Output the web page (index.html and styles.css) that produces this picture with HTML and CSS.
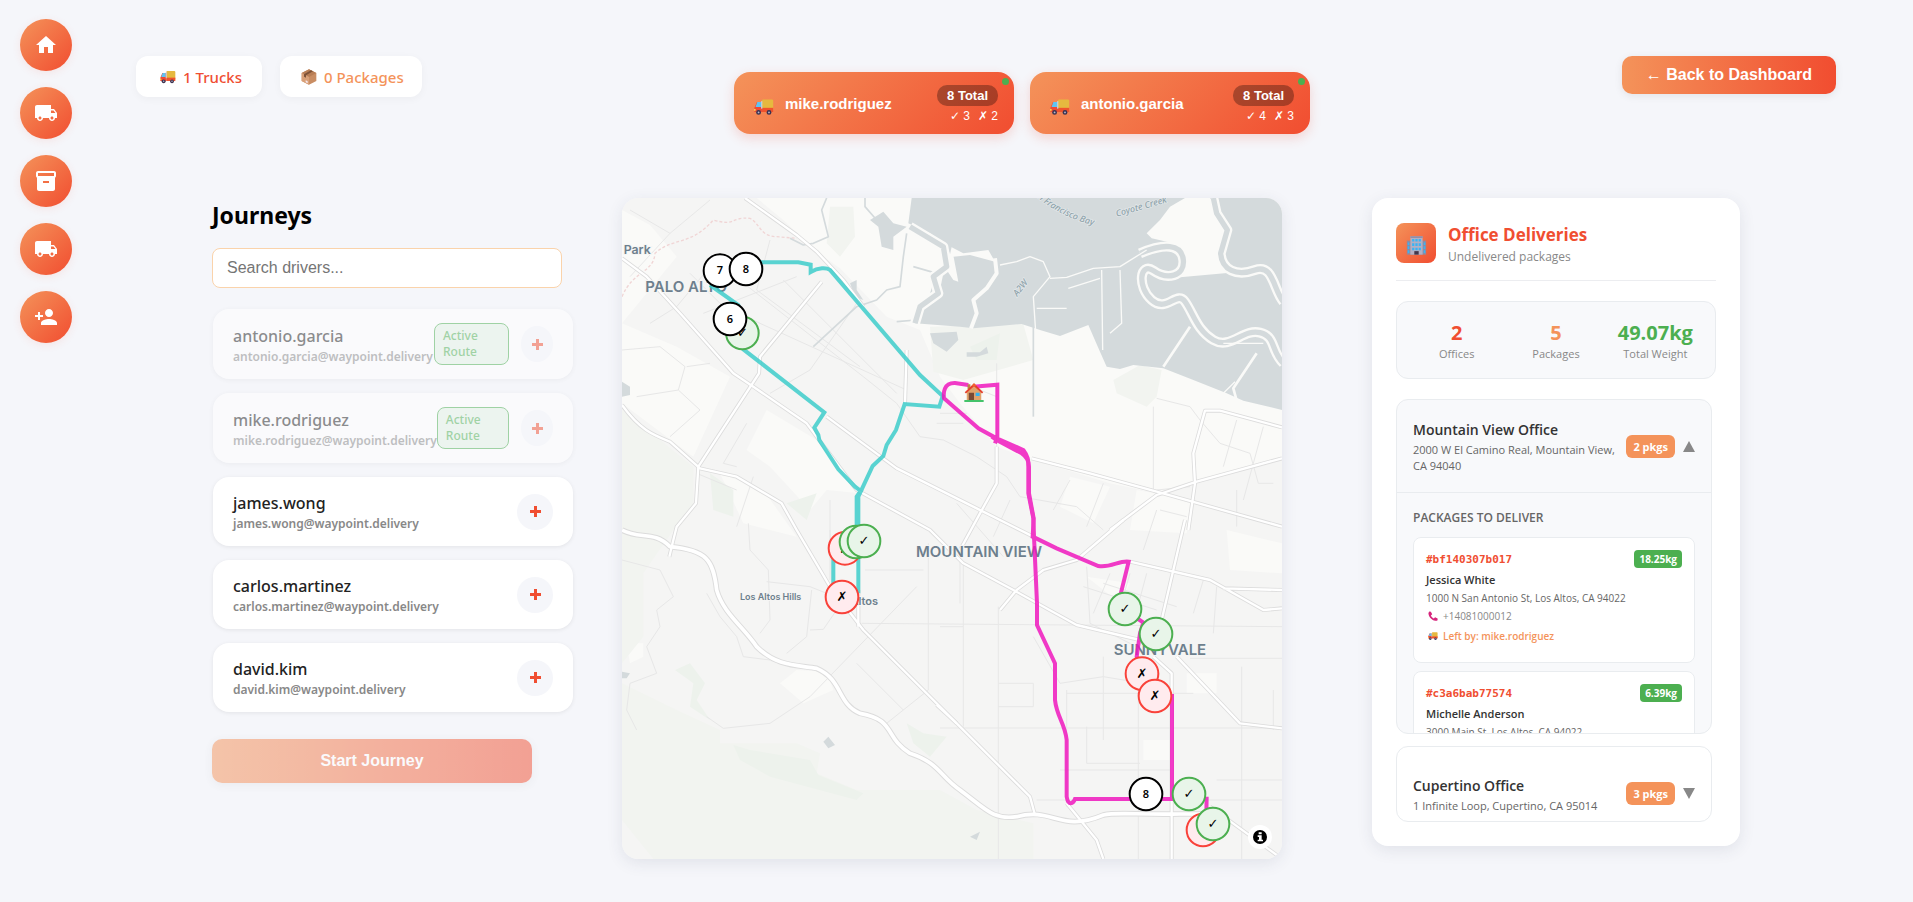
FILE: index.html
```html
<!DOCTYPE html>
<html lang="en">
<head>
<meta charset="utf-8">
<title>Journeys</title>
<link rel="stylesheet" href="styles.css">
</head>
<body>
<svg class="sprite" aria-hidden="true">
  <symbol id="truck" viewBox="0 0 24 24">
    <rect x="9.500" y="3" width="13.500" height="13.500" rx="1.500" fill="#e6b93f"/>
    <rect x="9.500" y="13" width="13.500" height="5" fill="#f0532d"/>
    <path d="M3.500 6h6v12h-9v-5z" fill="#ee4a35"/>
    <path d="M4 6h4.500v6H1.800z" fill="#5fc4f2"/>
    <rect x="8.500" y="5" width="1.500" height="9" fill="#c9d3dc"/>
    <rect x="0" y="14.500" width="2" height="2" fill="#ffd54a"/>
    <circle cx="5.500" cy="18.500" r="2.900" fill="#3b3350"/><circle cx="5.500" cy="18.500" r="1.100" fill="#b9b3c9"/>
    <circle cx="18" cy="18.500" r="2.900" fill="#3b3350"/><circle cx="18" cy="18.500" r="1.100" fill="#b9b3c9"/>
  </symbol>
  <symbol id="box" viewBox="0 0 24 24">
    <path d="M12 .5 23 6v12l-11 5.500L1 18V6z" fill="#c98d63"/>
    <path d="M12 .5 23 6l-11 6L1 6z" fill="#b87e55"/>
    <path d="M1 6l11 6v11.500L1 18z" fill="#d9a078"/>
    <path d="M15 2 4.500 7.800v4l3 1.500V9.500L18 3.500z" fill="#7d5238"/>
    <path d="M7 17l3 1.500v3L7 20z" fill="#f6e9f0"/>
  </symbol>
  <symbol id="office" viewBox="0 0 24 24">
    <path d="M1 7h22v16H1z" fill="#8f8aa0"/>
    <path d="M5 2h14v21H5z" fill="#b4afc2"/><path d="M5 2h14v2H5z" fill="#938ea6"/>
    <g fill="#39b4f5"><path d="M7 5h2.500v3H7zM10.700 5h2.600v3h-2.600zM14.500 5H17v3h-2.500zM7 10h2.500v3H7zM10.700 10h2.600v3h-2.600zM14.500 10H17v3h-2.500zM7 15h2.500v3H7zM10.700 15h2.600v3h-2.600zM14.500 15H17v3h-2.500z"/>
    <path d="M2 9h1.800v3H2zM2 13.500h1.800v3H2zM2 18h1.800v3H2zM20.200 9H22v3h-1.800zM20.200 13.500H22v3h-1.800zM20.200 18H22v3h-1.800z"/></g>
    <path d="M9.500 19h5v4h-5z" fill="#43364a"/>
  </symbol>
  <symbol id="phone" viewBox="0 0 24 24">
    <path d="M3 1l4 1 3 6-3 3c1 3 4 6 7 7l3-3 6 3v4c-2 2-5 2-8 1C8 21 2 14 1 6c0-2 1-4 2-5z" fill="#d6257c"/>
  </symbol>
  <symbol id="house" viewBox="0 0 24 24">
    <path d="M4 2h3.500v6H4z" fill="#b98548"/>
    <path d="M12 3l9 9v10H3V12z" fill="#e0a36c"/>
    <path d="M5.500 12.500H12V22H5.500z" fill="#7a4a35"/>
    <path d="M14 12.500h5v4h-5z" fill="#35b3f0"/>
    <path d="M12 .8 23.500 12l-1.500 1.600L12 4.500 2 13.600.5 12z" fill="#e5402c"/>
    <path d="M9 3.700 12 .8l3 2.900-3 1z" fill="#f0632f"/>
    <path d="M0 21.500h24V24H0z" fill="#44c36a"/>
  </symbol>
  <symbol id="m-truck" viewBox="0 0 24 24"><path d="M20 8h-3V4H3c-1.100 0-2 .9-2 2v11h2c0 1.660 1.340 3 3 3s3-1.340 3-3h6c0 1.660 1.340 3 3 3s3-1.340 3-3h2v-5l-3-4zM6 18.500c-.83 0-1.500-.67-1.500-1.500s.67-1.500 1.500-1.500 1.500.67 1.500 1.500-.67 1.500-1.500 1.500zm13.500-9l1.960 2.500H17V9.500h2.500zm-1.500 9c-.83 0-1.500-.67-1.500-1.500s.67-1.500 1.500-1.500 1.500.67 1.500 1.500-.67 1.500-1.500 1.500z"/></symbol>
</svg>

<div class="app">
  <nav class="rail" aria-label="Main">
    <a href="#" aria-label="Home"><svg viewBox="0 0 24 24"><path d="M10 20v-6h4v6h5v-8h3L12 3 2 12h3v8z"/></svg></a>
    <a href="#" aria-label="Trucks"><svg><use href="#m-truck"/></svg></a>
    <a href="#" aria-label="Packages"><svg viewBox="0 0 24 24"><path fill-rule="evenodd" d="M20 2H4c-1 0-2 .9-2 2v3.010c0 .72.430 1.340 1 1.690V20c0 1.100 1.100 2 2 2h14c.9 0 2-.9 2-2V8.700c.57-.35 1-.97 1-1.690V4c0-1.100-1-2-2-2zm-5 12H9v-2h6v2zm5-7H4V4h16v3z"/></svg></a>
    <a href="#" aria-label="Journeys"><svg><use href="#m-truck"/></svg></a>
    <a href="#" aria-label="Add driver"><svg viewBox="0 0 24 24"><path d="M15 12c2.210 0 4-1.790 4-4s-1.790-4-4-4-4 1.790-4 4 1.790 4 4 4zm-9-2V7H4v3H1v2h3v3h2v-3h3v-2H6zm9 4c-2.670 0-8 1.340-8 4v2h16v-2c0-2.660-5.330-4-8-4z"/></svg></a>
  </nav>

  <div class="page">
    <header class="top">
      <div class="counts">
        <div class="count count-trucks"><svg><use href="#truck"/></svg>1 Trucks</div>
        <div class="count count-packages"><svg><use href="#box"/></svg>0 Packages</div>
      </div>
      <div class="routes">
        <button class="route" type="button"><svg><use href="#truck"/></svg><span class="route-name">mike.rodriguez</span><span class="route-stats"><span class="total">8 Total</span><span class="marks"><span>✓ 3</span><span>✗ 2</span></span></span></button>
        <button class="route" type="button"><svg><use href="#truck"/></svg><span class="route-name">antonio.garcia</span><span class="route-stats"><span class="total">8 Total</span><span class="marks"><span>✓ 4</span><span>✗ 3</span></span></span></button>
      </div>
      <button class="back" type="button">← Back to Dashboard</button>
    </header>

    <main class="board">
      <section class="journeys">
        <h1>Journeys</h1>
        <input class="search" type="search" placeholder="Search drivers..." aria-label="Search drivers">
        <ul class="drivers">
          <li class="driver busy"><div class="who"><b>antonio.garcia</b><span>antonio.garcia@waypoint.delivery</span></div><span class="active">Active Route</span><button type="button" disabled aria-label="Add antonio.garcia"></button></li>
          <li class="driver busy"><div class="who"><b>mike.rodriguez</b><span>mike.rodriguez@waypoint.delivery</span></div><span class="active">Active Route</span><button type="button" disabled aria-label="Add mike.rodriguez"></button></li>
          <li class="driver"><div class="who"><b>james.wong</b><span>james.wong@waypoint.delivery</span></div><button type="button" aria-label="Add james.wong"></button></li>
          <li class="driver"><div class="who"><b>carlos.martinez</b><span>carlos.martinez@waypoint.delivery</span></div><button type="button" aria-label="Add carlos.martinez"></button></li>
          <li class="driver"><div class="who"><b>david.kim</b><span>david.kim@waypoint.delivery</span></div><button type="button" aria-label="Add david.kim"></button></li>
        </ul>
        <button class="start" type="button" disabled>Start Journey</button>
      </section>

      <section class="map" aria-label="Route map">
        <svg viewBox="36 24 1980 1983">
          <defs>
            <g id="roads">
              <path d="M405 24 560 135 620 185 700 270 760 350"/>
              <path d="M36 205 110 260 215 375 370 550 430 590 590 700 650 780 740 900 960 1020 1060 1120 1210 1200 1400 1305 1590 1350"/>
              <path d="M635 275 450 500 447 550 265 830 258 940 200 1010 190 1050 178 1100"/>
              <path d="M36 645C90 720 130 735 180 755L270 835 380 860 515 940 560 1020 660 1190 760 1320 1040 1600 1260 1820 1275 1875"/>
              <path d="M650 680 860 835 1100 955 1270 1040M1265 805 1440 850 1640 905 2016 1010"/>
              <path d="M1500 1020 1640 915 1760 875 2016 805M1735 1020 1755 880 1750 790 1785 662 1830 662 2016 712"/>
              <path d="M1160 770 1160 880 1110 970 1050 1080M1540 990 1400 1110 1300 1140 1220 1200 1170 1260M1725 990 1655 1290"/>
              <path d="M1560 1115 1800 1170 1960 1260 2016 1255M1840 1195 2016 1200"/>
              <path d="M1630 1400 1685 1450 1685 2007M1700 1400 1890 1600 2016 1615M980 1545 1040 1600"/>
              <path d="M890 480 885 640M745 1200 745 1310M1370 1840 1460 1950 1480 2007M1800 1850 2000 1995"/>
            </g>
            <path id="freeway" d="M36 1020C90 1050 130 1020 180 1070 290 1080 310 1110 320 1200 340 1270 400 1310 440 1370 500 1430 560 1425 620 1435 700 1470 680 1540 750 1570 860 1590 820 1640 900 1690 990 1720 990 1760 1050 1800 1130 1860 1150 1890 1220 1880 1330 1850 1350 1930 1480 1875 1520 1865 1580 1875 1710 1872H1800"/>
          </defs>
          <rect class="land" x="36" y="24" width="1980" height="1983"/>
          <g class="pale">
            <path d="M440 24 520 90 620 185 690 235 830 380 930 420 990 560 1050 640 1160 770 1270 810 1500 880 1640 910 2016 800V24zM36 60 120 105 200 200 36 400zM36 400 200 470 360 560 250 800 36 640zM470 660 620 750 750 910 650 900 600 960 480 830 410 780zM330 850 460 900 560 1040 400 1000zM1380 860 1500 890 1450 1000 1350 950zM1580 900 1750 930 1730 1030 1560 1020z"/>
            <path d="M510 1480 560 1440 650 1445 670 1500 580 1540zM50 1360 100 1360 100 1400 60 1420zM1430 1160 1560 1180 1530 1240zM1850 1020 2016 1060V1150L1860 1140zM1600 1650h80v60h-80zM1730 1450h90v60h-90zM530 2007c20-30 60-30 70 0z"/>
          </g>
          <g class="green">
            <path d="M36 1010 36 660 120 725 250 830 250 950 190 1020 100 1150 100 1340 36 1420zM36 1480 200 1560 330 1620 330 1660 560 1660 630 1690 620 1750 740 1800H990L1100 1860 1270 1900V2007H130L36 1890zM660 50 730 50 735 140 690 200 650 160zM960 410 1240 402 1270 510 1060 570 970 545zM1510 570 1590 525 1655 540 1640 620 1610 650 1520 610z"/>
            <path class="deep" d="M370 1665 420 1680 600 1710 625 1755 760 1810 740 1830 480 1760 390 1710zM195 1440 240 1420 285 1480 260 1530 300 1590 240 1550 250 1480zM300 850 370 900 370 980 310 960zM530 940 620 910 590 990zM890 1600 940 1630 1010 1640 960 1700 910 1660zM1080 470 1170 430 1160 510 1100 510z"/>
          </g>
          <g class="minor">
            <path d="M60 60 180 130 300 30M180 130 60 260M300 230 200 350 120 400M240 250 330 340 450 400 890 600M280 370 560 260M350 240 760 560 860 640 930 740 1000 750M480 150 440 300 750 530M520 270 860 610M740 340 600 540 480 610M36 480 150 470 225 530 205 600 80 620M205 600 270 660 180 740M300 520 230 530M410 700 340 820 380 830M430 860 380 1010M260 850 380 900M920 1190 600 1520 480 1600 340 1615 290 1580"/>
            <path d="M660 1020 665 1190M660 930V1170M765 1140H940M755 1300 2016 1310M955 1060V1500L830 1600M470 1175 600 1190 650 1210M415 1000 420 1080 475 1140 480 1290 450 1330M290 1210 330 1280 380 1340 400 1400 480 1410M600 1320 640 1318 680 1260M530 1390 590 1340 605 1200M740 1420 880 1560M36 1110 150 1140 190 1220 140 1260 150 1310 110 1370 140 1450 60 1480 50 1560 80 1620"/>
            <path d="M1060 1120 1060 1610M990 1310H1060M1165 1250V2007M1270 1340 1350 1480 1480 1460 1600 1480M1370 1500V1850M1430 1610V1720H1590M1585 1420V2007M1480 1400V1650M990 1614H2016M1370 1510H1750M1165 1480H1270V1550H1165M1895 1430V2007M1820 1770H2016M1280 1830H2016M1740 1405H2016M1350 1740H1690M1990 1500V1620M1430 1130 1440 1300 1600 1380M1480 1180 1700 1250M1420 1190 1640 1260M1500 1150 1450 1270M1560 1150 1520 1290M1610 1150 1570 1300M1780 1170 1750 1270M1820 1190 1810 1330"/>
            <path d="M1000 750 1100 800 1190 860 1230 920 1400 950 1480 1020M1380 870 1330 960M1480 880 1430 1010M1630 650V900M1640 625 1740 650 1770 690 1830 760 1920 790 1945 880 1990 880M1880 690 1840 830M1960 710 1900 930M1640 900 1740 890M1650 960 1730 980M1640 960 1600 1080M1880 900V1010M1040 940 1180 1100M1200 930 1150 1040M1050 1080V1240M1160 520V770M1060 580 1160 620M990 670H1070M980 700H1060"/>
          </g>
          <path class="trail" d="M36 320C70 240 130 250 135 190 190 140 240 170 310 90 380 110 360 80 420 85 450 100 450 140 500 140L560 145"/>
          <g class="water">
            <path d="M905 24 895 100 960 130 1010 165 1030 220 1000 250 990 300 950 345 915 400 1050 410 1090 415 1235 402 1290 420 1350 438 1435 405 1470 485 1490 530 1530 537 1570 525 1660 535 1750 570 1850 610 1900 632 2016 660V24zM780 90 820 65 850 100 890 110 850 140 850 180 815 170 805 110zM960 430 1040 425 1045 450 1010 485 970 460zM720 280 740 270 740 300 760 330 735 320zM36 575 60 590V615L36 620zM36 1445 60 1450 50 1465 36 1465zM640 1655 655 1640 675 1665 655 1675zM1080 1940 1110 1925 1100 1950zM1070 487 1110 487 1130 470 1135 490 1100 500 1070 500z"/>
          </g>
          <g class="creek"><path d="M650 24 635 60 655 140 610 160 580 165 540 145"/><path d="M765 24V50L800 90M890 130 880 200 870 290 830 300 800 330 740 350 610 470"/><path d="M910 230 980 250 960 320 920 390 860 395"/><path d="M1270 400V680"/></g>
          <g class="pale">
            <path d="M1725 24 1680 50 1650 90 1610 130 1625 145 1690 160 1720 190 1725 230 1710 262 1860 248 1825 210 1840 130 1820 70 1800 24zM1025 172 1060 190 1135 180 1155 215 1080 195 1030 200zM1025 170 1045 275 1030 270 1010 240z"/>
          </g>
          <path class="bank" d="M1810 24 1820 70 1852 120 1832 190C1835 240 1880 260 1935 240S1990 300 2020 335M1590 190C1660 160 1715 160 1720 210S1670 270 1630 242 1580 290 1625 330 1700 300 1725 335 1760 420 1810 450 1900 415 1950 428 1980 480 2020 520M900 110 1000 170 1010 230 970 260 985 310 930 350 915 400"/>
          <path class="channel" d="M1810 24 1820 70 1852 120 1832 190C1835 240 1880 260 1935 240S1990 300 2020 335M1590 190C1660 160 1715 160 1720 210S1670 270 1630 242 1580 290 1625 330 1700 300 1725 335 1760 420 1810 450 1900 415 1950 428 1980 480 2020 520M900 110 1000 170 1010 230 970 260 985 310 930 350 915 400"/>
          <g class="levee"><path d="M1155 205 1160 250 1130 295 1090 330 1100 370 1083 415" stroke-width="12"/><path d="M1170 225 1220 215 1260 200 1300 215 1320 260 1270 320 1278 440M1320 265 1370 262 1450 235 1530 230 1610 180"/><path d="M1280 355H1370M1375 295 1470 265M1475 240 1478 480M1530 240 1535 400 1500 430"/><path d="M1740 410 1700 470 1660 530M1940 490 1870 595 1880 632" stroke-width="8"/><path d="M1740 570 1780 590 1840 610 1875 575M1840 460H1960"/></g>
          <g class="casing"><use href="#roads"/></g><g class="casing wide"><use href="#freeway"/></g>
          <g class="fill"><use href="#roads"/></g><g class="fill wide"><use href="#freeway"/></g>

          <g class="place">
            <text x="41" y="191" class="town">Park</text>
            <text x="106" y="306">PALO ALTO</text>
            <text x="918" y="1100">MOUNTAIN VIEW</text>
            <text x="1511" y="1396">SUNNYVALE</text>
            <text x="390" y="1231" class="hamlet">Los Altos Hills</text>
            <text x="804" y="1245" class="town2">Los Altos</text>
          </g>
          <g class="watername">
            <path id="bay" d="M1270 12Q1350 85 1475 112" fill="none"/>
            <text><textPath href="#bay">an Francisco Bay</textPath></text>
            <text transform="translate(1520 80) rotate(-16)">Coyote Creek</text>
            <text transform="translate(1222 320) rotate(-52)">A2W</text>
          </g>

          <g class="line teal"><path d="M408 217H565L602 224V246C625 232 650 232 660 240L930 555 998 618 988 650 884 642 858 720 830 765 820 798 788 828 752 905 745 920V1210"/><path d="M670 1210V1075L740 1060V920L752 903 735 890 685 838 628 750 625 735 613 713 643 667 400 478 385 345 300 285"/></g>
          <g class="line pink"><path d="M1090 590 1162 584V740L1155 760M1075 585 1035 579C1000 578 1000 610 1002 625L1105 715 1160 745 1240 780C1255 800 1255 810 1255 830V910L1270 985 1272 1040 1281 1240V1305L1335 1420V1530C1340 1580 1365 1600 1370 1650V1820C1375 1850 1390 1840 1395 1827H1686V1512"/><path d="M1145 740 1160 750 1235 790C1250 800 1257 810 1257 830V910L1271 985 1268 1040 1340 1075 1465 1128C1500 1135 1530 1110 1556 1115L1530 1220 1545 1260 1600 1298 1590 1330 1580 1400 1640 1520M1790 1820 1789 1870 1780 1900"/></g>
          <use href="#house" x="1060" y="578" width="64" height="58"/>

          <g class="pin fail"><circle cx="705" cy="1075" r="49"/><text x="705" y="1088">✗</text></g>
          <g class="pin done"><circle cx="738" cy="1056" r="49"/></g>
          <g class="pin done"><circle cx="762" cy="1053" r="49"/><text x="762" y="1066">✓</text></g>
          <g class="pin fail"><circle cx="696" cy="1221" r="49"/><text x="696" y="1234">✗</text></g>
          <g class="pin done"><circle cx="397" cy="429" r="49"/><text x="397" y="442">✓</text></g>
          <g class="pin"><circle cx="360" cy="387" r="49"/><text x="360" y="398">6</text></g>
          <g class="pin"><circle cx="330" cy="242" r="49"/><text x="330" y="253">7</text></g>
          <g class="pin"><circle cx="408" cy="237" r="49"/><text x="408" y="248">8</text></g>
          <g class="pin done"><circle cx="1545" cy="1257" r="49"/><text x="1545" y="1270">✓</text></g>
          <g class="pin done"><circle cx="1638" cy="1332" r="49"/><text x="1638" y="1345">✓</text></g>
          <g class="pin fail"><circle cx="1596" cy="1451" r="49"/><text x="1596" y="1464">✗</text></g>
          <g class="pin fail"><circle cx="1635" cy="1518" r="49"/><text x="1635" y="1531">✗</text></g>
          <g class="pin"><circle cx="1608" cy="1812" r="49"/><text x="1608" y="1823">8</text></g>
          <g class="pin done"><circle cx="1737" cy="1812" r="49"/><text x="1737" y="1825">✓</text></g>
          <g class="pin fail"><circle cx="1779" cy="1920" r="49"/><text x="1779" y="1933">✗</text></g>
          <g class="pin done"><circle cx="1809" cy="1902" r="49"/><text x="1809" y="1915">✓</text></g>
          <circle cx="1950" cy="1941" r="36" fill="#fff"/>
          <circle cx="1950" cy="1941" r="21"/>
          <path d="M1946 1927h9v6h-9zM1943 1936h12v13h4v5h-16v-5h4v-8h-4z" fill="#fff"/>
        </svg>
      </section>

      <aside class="offices">
        <header class="offices-head">
          <span class="tile"><svg><use href="#office"/></svg></span>
          <div><h2>Office Deliveries</h2><p>Undelivered packages</p></div>
        </header>
        <dl class="summary">
          <div><dd class="red">2</dd><dt>Offices</dt></div>
          <div><dd class="orange">5</dd><dt>Packages</dt></div>
          <div><dd class="leaf">49.07kg</dd><dt>Total Weight</dt></div>
        </dl>
        <div class="office-list">
          <article class="office open">
            <button class="office-head" type="button" aria-expanded="true"><span class="office-text"><b>Mountain View Office</b><span>2000 W El Camino Real, Mountain View, CA 94040</span></span><span class="pkgs">2 pkgs</span><span class="arrow up"></span></button>
            <div class="office-body">
              <h3>PACKAGES TO DELIVER</h3>
              <div class="package">
                <div class="package-top"><code>#bf140307b017</code><span class="kg">18.25kg</span></div>
                <p class="person">Jessica White</p>
                <p class="address">1000 N San Antonio St, Los Altos, CA 94022</p>
                <p class="tel"><svg><use href="#phone"/></svg>+14081000012</p>
                <p class="left"><svg><use href="#truck"/></svg>Left by: mike.rodriguez</p>
              </div>
              <div class="package">
                <div class="package-top"><code>#c3a6bab77574</code><span class="kg">6.39kg</span></div>
                <p class="person">Michelle Anderson</p>
                <p class="address">3000 Main St, Los Altos, CA 94022</p>
              </div>
            </div>
          </article>
          <article class="office">
            <button class="office-head" type="button" aria-expanded="false"><span class="office-text"><b>Cupertino Office</b><span>1 Infinite Loop, Cupertino, CA 95014</span></span><span class="pkgs">3 pkgs</span><span class="arrow"></span></button>
          </article>
        </div>
      </aside>
    </main>
  </div>
</div>
</body>
</html>
```
FILE: styles.css
```css
* { box-sizing: border-box; }
body { margin: 0; min-height: 100vh; background: #f5f6fa; color: #222; font-family: "Noto Sans", "Open Sans", sans-serif; }
h1, h2, h3, p, ul, dl, dd { margin: 0; padding: 0; }
button { border: 0; padding: 0; font-family: "Liberation Sans", Arial, sans-serif; color: #fff; }
.sprite { display: none; }
.app { display: flex; align-items: flex-start; min-height: 100vh; }

.rail { display: flex; flex-direction: column; gap: 16px; padding: 19px 20px; }
.rail a { display: grid; place-items: center; width: 52px; height: 52px; border-radius: 50%; background: linear-gradient(135deg, #f4935a, #f14d30); box-shadow: 0 2px 8px rgba(241, 77, 48, .1); }
.rail svg { width: 24px; height: 24px; fill: #fff; }

.page { flex: 1; min-width: 0; padding-bottom: 40px; }
.top { display: grid; grid-template-columns: 1fr auto 1fr; align-items: start; padding: 56px 77px 0 44px; min-height: 198px; }
.counts { display: flex; gap: 18px; }
.count { display: flex; align-items: center; gap: 7px; height: 41px; padding: 0 20px 0 24px; border-radius: 12px; background: #fff; font-size: 15px; font-weight: 500; box-shadow: 0 2px 8px rgba(0, 0, 0, .04); white-space: nowrap; }
.count svg { width: 16px; height: 16px; }
.count-trucks { color: #f04e31; }
.count-packages { color: #f4935a; padding-left: 21px; padding-right: 18px; }
.routes { display: flex; gap: 16px; margin: 16px 0 0 72px; }
.route { position: relative; display: flex; align-items: center; width: 280px; height: 62px; padding: 0 16px 0 20px; border-radius: 16px; background: linear-gradient(135deg, #f4935a, #f14d30); box-shadow: 0 4px 12px rgba(241, 77, 48, .2); text-align: left; }
.route > svg { width: 20px; height: 20px; margin: 7px 11px 0 0; }
.route::after { content: ""; position: absolute; top: 6px; right: 5px; width: 7px; height: 7px; border-radius: 50%; background: #4caf50; }
.route-name { flex: 1; font-size: 15px; font-weight: 700; }
.route-stats { display: flex; flex-direction: column; align-items: flex-end; gap: 4px; }
.total { padding: 3px 10px; border-radius: 10px; background: rgba(0, 0, 0, .3); font-size: 13px; font-weight: 700; line-height: 15px; }
.marks { display: flex; gap: 8px; font-size: 12px; line-height: 12px; font-family: "Liberation Sans", "DejaVu Sans", sans-serif; }
.back { justify-self: end; height: 38px; padding: 0 24px; border-radius: 10px; background: linear-gradient(90deg, #f4935a, #f14d30); box-shadow: 0 2px 8px rgba(0, 0, 0, .08); font-size: 16px; font-weight: 700; }

.board { display: grid; grid-template-columns: 361px minmax(0, 1fr) 368px; column-gap: 49px; align-items: start; padding: 0 173px 0 120px; }
.journeys { min-width: 0; }
.journeys h1 { color: #000; font-size: 23px; line-height: 34px; font-weight: 700; }
.search { display: block; width: 350px; height: 40px; margin: 16px 0 21px; padding: 0 14px; border: 1px solid #fad3ab; border-radius: 8px; background: #fff; font: 16px "Liberation Sans", Arial, sans-serif; color: #222; }
.search::placeholder { color: #757575; opacity: 1; }
.drivers { display: flex; flex-direction: column; gap: 14px; margin-left: 1px; list-style: none; }
.driver { display: flex; align-items: center; justify-content: space-between; height: 69px; padding: 0 20px; border-radius: 16px; background: #fff; box-shadow: 0 1px 4px rgba(0, 0, 0, .08); }
.driver.busy { height: 70px; opacity: .5; }
.who { display: flex; flex-direction: column; padding-top: 1px; white-space: nowrap; }
.who b { font-size: 16px; line-height: 24px; font-weight: 500; }
.who span { font-size: 12px; line-height: 18px; font-weight: 600; color: #888; }
.active { flex: 1; max-width: 75px; margin-left: auto; padding: 4px 8px; border: 1px solid #4caf50; border-radius: 8px; background: #e4f3e6; color: #4caf50; font-size: 12px; line-height: 16px; font-weight: 500; }
.driver button { position: relative; flex: none; width: 36px; height: 36px; border-radius: 50%; background: #f5f6fa; }
.busy button { width: 32px; margin-left: 12px; }
.driver button::before, .driver button::after { content: ""; position: absolute; inset: 0; margin: auto; background: #f04e31; }
.driver button::before { width: 11px; height: 3px; }
.driver button::after { width: 3px; height: 11px; }
.start { display: block; width: 320px; height: 44px; margin-top: 27px; border-radius: 10px; background: linear-gradient(90deg, #f4935a, #f14d30); font-size: 16px; font-weight: 700; opacity: .5; box-shadow: 0 2px 8px rgba(0, 0, 0, .08); }

.map { margin-right: 41px; border-radius: 16px; overflow: hidden; box-shadow: 0 4px 16px rgba(50, 60, 90, .1); }
.map svg { display: block; width: 100%; height: auto; }
.land { fill: #f5f5f4; }
.pale { fill: #fafaf8; }
.green { fill: #f2f4f0; }
.deep { fill: #edf2ec; }
.water { fill: #d4dadc; }
.minor, .creek, .bank, .channel, .levee, .casing, .fill, .trail { fill: none; stroke-linejoin: round; }
.minor { stroke: #e7e7e7; stroke-width: 3; }
.creek { stroke: #d4dadc; stroke-width: 5; }
.trail { stroke: #f0d5d5; stroke-width: 4; stroke-dasharray: 9 6; }
.bank { stroke: #fafaf8; stroke-width: 30; }
.channel { stroke: #d4dadc; stroke-width: 16; }
.levee { stroke: #fafaf8; stroke-width: 4; }
.casing { stroke: #dcdcdc; stroke-width: 12; }
.fill { stroke: #fff; stroke-width: 7; }
.casing.wide { stroke-width: 17; }
.fill.wide { stroke-width: 11; }
.place { fill: #6d7f8d; font-family: Inter, sans-serif; font-size: 45px; font-weight: 600; stroke: #f5f5f4; stroke-width: 6; paint-order: stroke; }
.town { font-size: 37px; }
.town2 { font-size: 33px; text-anchor: end; }
.hamlet { font-size: 27px; }
.watername { fill: #8fa3ab; font-family: "Noto Sans", sans-serif; font-style: italic; font-size: 27px; font-weight: 500; stroke: #e3e8ea; stroke-width: 4; paint-order: stroke; }
.watername path { stroke: none; }
.line { fill: none; stroke-width: 12; opacity: .82; }
.teal { stroke: #38ccca; }
.pink { stroke: #f011bd; }
.pin circle { fill: #fff; stroke: #000; stroke-width: 6; }
.pin.done circle { fill: #e8f5e9; stroke: #4caf50; }
.pin.fail circle { fill: #ffebee; stroke: #f9423a; }
.pin text { text-anchor: middle; font: 600 33px "Noto Sans", sans-serif; }
.pin.done text, .pin.fail text { font: 700 39px "DejaVu Sans", sans-serif; }

.offices { padding: 24px; border-radius: 16px; background: #fff; font-family: "Open Sans", "Noto Sans", sans-serif; box-shadow: 0 4px 16px rgba(50, 60, 90, .1); }
.offices-head { display: flex; gap: 12px; padding-bottom: 14px; border-bottom: 1px solid #ecedf0; }
.tile { display: grid; place-items: center; width: 40px; height: 40px; margin-top: 1px; border-radius: 8px; background: linear-gradient(135deg, #f4935a, #f14d30); }
.tile svg { width: 21px; height: 22px; margin-top: 3px; }
.offices h2 { color: #f04e31; font-size: 17px; line-height: 26px; font-weight: 700; }
.offices-head p { color: #888; font-size: 12px; line-height: 18px; }
.summary { display: grid; grid-template-columns: repeat(3, 1fr); margin: 20px 0; padding: 17px 10px; border: 1px solid #e9ecef; border-radius: 12px; background: #f8f9fb; text-align: center; }
.summary div { display: flex; flex-direction: column; }
.summary dd { font-size: 20px; line-height: 28px; font-weight: 700; }
.summary dt { color: #888; font-size: 11px; line-height: 14px; }
.red { color: #f04e31; }
.orange { color: #f4935a; }
.leaf { color: #4caf50; }
.office-list { display: flex; flex-direction: column; gap: 12px; margin-right: 4px; }
.office { height: 76px; border: 1px solid #e9ecef; border-radius: 12px; overflow: hidden; }
.office.open { height: 335px; background: #f8f9fb; }
.office-head { display: flex; align-items: center; width: 100%; height: 93px; padding: 0 16px; background: none; font-family: "Open Sans", "Noto Sans", sans-serif; text-align: left; }
.open .office-head { border-bottom: 1px solid #e9ecef; }
.office-text { display: flex; flex-direction: column; flex: 1; }
.office-text b { color: #333; font-size: 14px; line-height: 24px; font-weight: 600; }
.office-text span { color: #666; font-size: 11px; line-height: 16px; }
.pkgs { flex: none; padding: 0 7px; border-radius: 6px; background: #f4935a; font-size: 11px; line-height: 23px; font-weight: 700; }
.arrow { flex: none; margin: 0 0 0 8px; border: 6px solid transparent; border-top: 11px solid #888; border-bottom: 0; }
.arrow.up { border-top: 0; border-bottom: 11px solid #888; }
.office-body { display: flex; flex-direction: column; gap: 8px; padding: 16px; }
.office-body h3 { margin-bottom: 2px; color: #666; font-size: 12px; line-height: 18px; font-weight: 600; }
.package { min-height: 126px; padding: 12px; border: 1px solid #e9ecef; border-radius: 8px; background: #fff; }
.package-top { display: flex; justify-content: space-between; align-items: center; height: 18px; }
.package code { color: #f04e31; font: 700 11px "DejaVu Sans Mono", monospace; }
.kg { padding: 0 5px; border-radius: 4px; background: #4caf50; color: #fff; font-size: 10px; line-height: 18px; font-weight: 700; }
.person { margin-top: 3px; color: #333; font-size: 11px; line-height: 18px; font-weight: 600; }
.address { color: #666; font-size: 10px; line-height: 18px; }
.tel, .left { display: flex; align-items: center; gap: 5px; color: #888; font-size: 10px; line-height: 18px; }
.left { margin-top: 2px; color: #f4935a; font-weight: 600; }
.tel svg, .left svg { width: 10px; height: 10px; margin-left: 2px; }
```
